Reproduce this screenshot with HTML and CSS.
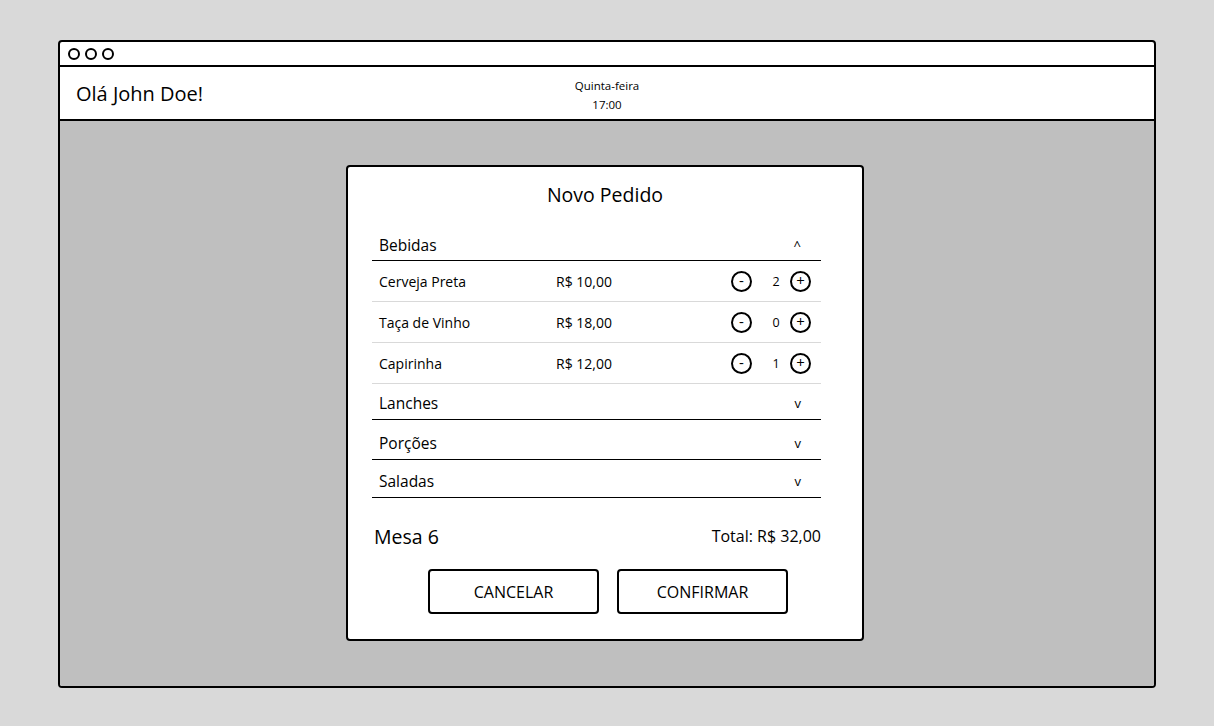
FILE: index.html
```html
<!DOCTYPE html>
<html lang="pt-BR">
<head>
<meta charset="utf-8">
<title>Novo Pedido</title>
<link rel="stylesheet" href="styles.css">
</head>
<body>
<div class="window">
  <div class="titlebar">
    <span class="dot"></span><span class="dot"></span><span class="dot"></span>
  </div>
  <header class="header">
    <div class="greeting">Olá John Doe!</div>
    <div class="datetime">
      <div>Quinta-feira</div>
      <div>17:00</div>
    </div>
  </header>
  <main class="content">
    <section class="modal">
      <h1 class="modal-title">Novo Pedido</h1>
      <div class="list">
        <div class="section-head"><span>Bebidas</span><span class="chev">^</span></div>
        <div class="item">
          <span class="item-name">Cerveja Preta</span>
          <span class="item-price">R$ 10,00</span>
          <span class="qty">
            <span class="circ">-</span><span class="qty-num">2</span><span class="circ">+</span>
          </span>
        </div>
        <div class="item">
          <span class="item-name">Taça de Vinho</span>
          <span class="item-price">R$ 18,00</span>
          <span class="qty">
            <span class="circ">-</span><span class="qty-num">0</span><span class="circ">+</span>
          </span>
        </div>
        <div class="item">
          <span class="item-name">Capirinha</span>
          <span class="item-price">R$ 12,00</span>
          <span class="qty">
            <span class="circ">-</span><span class="qty-num">1</span><span class="circ">+</span>
          </span>
        </div>
        <div class="section-head"><span>Lanches</span><span class="chev">v</span></div>
        <div class="section-head"><span>Porções</span><span class="chev">v</span></div>
        <div class="section-head"><span>Saladas</span><span class="chev">v</span></div>
      </div>
      <div class="summary">
        <span class="table">Mesa 6</span>
        <span class="total">Total: R$ 32,00</span>
      </div>
      <div class="actions">
        <button class="btn">CANCELAR</button>
        <button class="btn">CONFIRMAR</button>
      </div>
    </section>
  </main>
</div>
</body>
</html>
```

FILE: styles.css
```css
* { box-sizing: border-box; }
html, body { margin: 0; padding: 0; }
body {
  background: #d9d9d9;
  font-family: "Open Sans", "Noto Sans", sans-serif;
  color: #000;
  padding: 40px 58px 0 58px;
}
.window {
  width: 1098px;
  height: 648px;
  border: 2px solid #000;
  border-radius: 4px;
  background: #fff;
  display: flex;
  flex-direction: column;
  overflow: hidden;
}
.titlebar {
  height: 25px;
  border-bottom: 2px solid #000;
  display: flex;
  align-items: center;
  gap: 5px;
  padding-left: 8px;
}
.dot {
  width: 12px;
  height: 12px;
  border: 2px solid #000;
  border-radius: 50%;
}
.header {
  height: 54px;
  border-bottom: 2px solid #000;
  display: flex;
  align-items: center;
  position: relative;
  padding-left: 16px;
}
.greeting { font-size: 20px; }
.datetime {
  position: absolute;
  left: 0;
  right: 0;
  top: 9px;
  text-align: center;
  font-size: 11.5px;
  line-height: 19px;
}
.content {
  flex: 1;
  background: #bfbfbf;
  display: flex;
  justify-content: center;
  padding-top: 44px;
  padding-right: 4px;
}
.modal {
  width: 518px;
  height: 476px;
  background: #fff;
  border: 2px solid #000;
  border-radius: 4px;
  padding: 14px 41px 0 24px;
}
.modal-title {
  margin: 0;
  font-weight: normal;
  font-size: 19.5px;
  text-align: center;
  line-height: 28px;
  margin-left: 17px;
}
.list { margin-top: 15px; }
.section-head {
  height: 40px;
  border-bottom: 1px solid #000;
  display: flex;
  align-items: center;
  justify-content: space-between;
  padding: 6px 20px 0 7px;
  font-size: 15.5px;
}
.list .section-head:first-child { height: 37px; padding-top: 6px; }
.list .item + .section-head { height: 36px; padding-top: 2px; }
.list .section-head:last-child { height: 38px; padding-top: 4px; }
.chev { font-size: 13px; }
.item {
  height: 41px;
  border-bottom: 1px solid #d9d9d9;
  display: flex;
  align-items: center;
  padding: 0 10px 0 7px;
  font-size: 14px;
}
.item-name { width: 177px; }
.item-price { flex: 1; }
.qty { display: flex; align-items: center; }
.circ {
  width: 21px;
  height: 21px;
  border: 2px solid #000;
  border-radius: 50%;
  display: flex;
  align-items: center;
  justify-content: center;
  font-size: 15px;
  line-height: 1;
  padding-bottom: 1px;
}
.qty-num { width: 38px; text-align: center; font-size: 12.5px; padding-left: 10px; }
.summary {
  display: flex;
  justify-content: space-between;
  align-items: center;
  margin-top: 24px;
  padding-left: 2px;
  height: 28px;
}
.table { font-size: 19.5px; }
.total { font-size: 16px; }
.actions {
  display: flex;
  justify-content: center;
  gap: 18px;
  margin-top: 19px;
  margin-left: 23px;
}
.btn {
  width: 171px;
  height: 45px;
  background: #fff;
  border: 2px solid #000;
  border-radius: 4px;
  font-family: inherit;
  font-size: 16px;
  color: #000;
}
```
